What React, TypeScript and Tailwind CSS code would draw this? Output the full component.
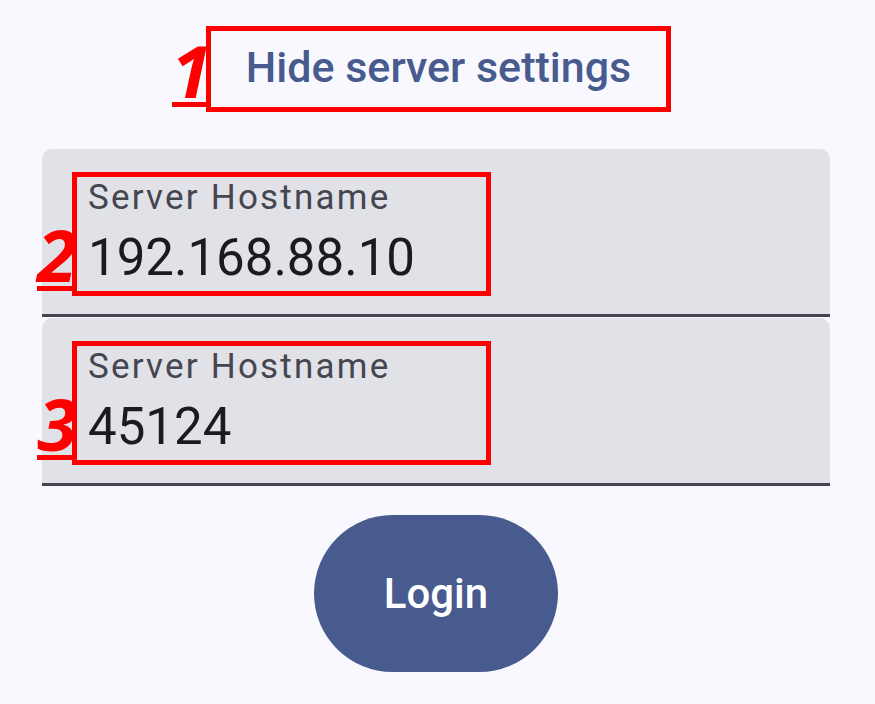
import React from 'react';

// Red numbered callout: digit sitting on an underline that runs into the box's left edge
function Callout({ n, width }: { n: string; width: string }) {
  return (
    <div
      className={`absolute right-full bottom-0 ${width} border-b-[5px] border-[#ff0000] flex justify-center`}
    >
      <span className="text-[72px] leading-[64px] font-bold italic text-[#ff0000] [font-family:'Open_Sans',sans-serif]">
        {n}
      </span>
    </div>
  );
}

function Field({ label, value, n }: { label: string; value: string; n: string }) {
  return (
    <div className="h-[168px] w-[788px] rounded-t-[10px] bg-[#e1e2e8] border-b-[3px] border-[#45464f] pl-[30px] pt-[23px]">
      <div className="relative w-[419px] h-[124px] border-[5px] border-[#ff0000] pl-[11px]">
        <Callout n={n} width="w-[40px]" />
        <div className="pt-[1px] text-[35px] leading-[40px] tracking-[2.2px] text-[#45464f]">
          {label}
        </div>
        <div className="mt-[12px] text-[51px] leading-[56px] text-[#1a1b20]">{value}</div>
      </div>
    </div>
  );
}

export default function App() {
  return (
    <div className="min-h-[704px] w-[875px] bg-[#f8f8fe] pt-[26px] flex flex-col items-center [font-family:Roboto,'Liberation_Sans',sans-serif]">
      <div className="relative ml-[2px] border-[5px] border-[#ff0000] px-[35px] pt-[11px] pb-[14px]">
        <Callout n="1" width="w-[39px]" />
        <span className="text-[43px] leading-[51px] font-medium text-[#475b8e]">Hide server settings</span>
      </div>

      <div className="self-start ml-[42px] mt-[37px] flex flex-col gap-[1px]">
        <Field label="Server Hostname" value="192.168.88.10" n="2" />
        <Field label="Server Hostname" value="45124" n="3" />
      </div>

      <button className="mt-[29px] mr-[3px] w-[244px] h-[157px] rounded-full bg-[#475b8e] text-white text-[42px] font-medium">
        Login
      </button>
    </div>
  );
}
